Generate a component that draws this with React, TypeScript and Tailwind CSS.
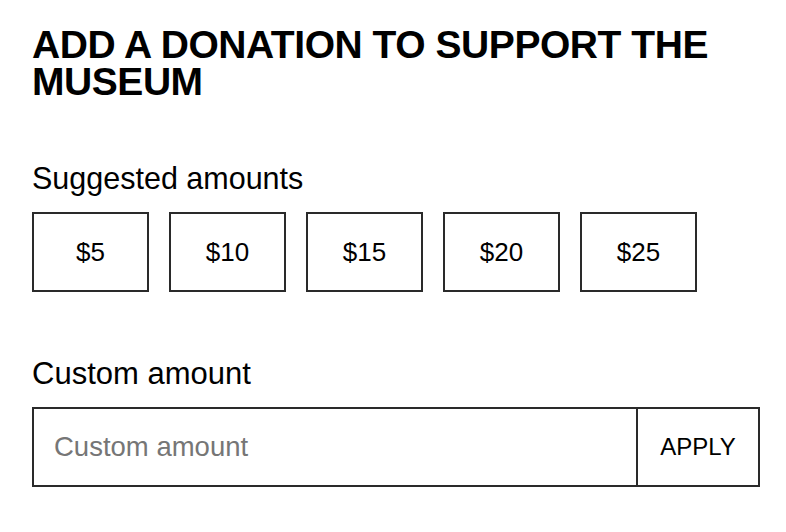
import { useState } from "react";

const amounts = [5, 10, 15, 20, 25];

export default function App() {
    const [selected, setSelected] = useState<number | null>(null);
    const [custom, setCustom] = useState<string>("");

    return (
        <main
            className="min-h-[532px] bg-white text-black pt-[26px] pl-8"
            style={{ fontFamily: '"Liberation Sans", Arial, Helvetica, sans-serif' }}
        >
            <h1 className="w-[720px] text-[39px] leading-[37px] font-bold tracking-[-0.45px] uppercase">
                Add a donation to support the museum
            </h1>

            <section className="mt-[60px]">
                <p className="text-[30.5px] leading-[36px]">Suggested amounts</p>
                <div className="mt-4 flex gap-[20px]">
                    {amounts.map((amount) => (
                        <button
                            key={amount}
                            onClick={() => setSelected(amount)}
                            className={`w-[117px] h-[80px] border-2 border-[#2a2a2a] text-[26px] flex items-center justify-center ${selected === amount ? 'bg-black text-white' : 'bg-white'}`}
                        >
                            ${amount}
                        </button>
                    ))}
                </div>
            </section>

            <section className="mt-[64px]">
                <p className="text-[31px] leading-[36px]">Custom amount</p>
                <div className="mt-[15px] w-[728px] h-[80px] flex border-2 border-[#2a2a2a]">
                    {/* input + apply share one outer border */}
                    <input
                        type="text"
                        value={custom}
                        onChange={(e) => setCustom(e.target.value)}
                        placeholder="Custom amount"
                        className="flex-1 min-w-0 px-5 text-[27.5px] outline-none placeholder:text-[#767676]"
                    />
                    <button className="w-[122px] border-l-2 border-[#2a2a2a] text-[24px] uppercase">
                        Apply
                    </button>
                </div>
            </section>
        </main>
    );
}
